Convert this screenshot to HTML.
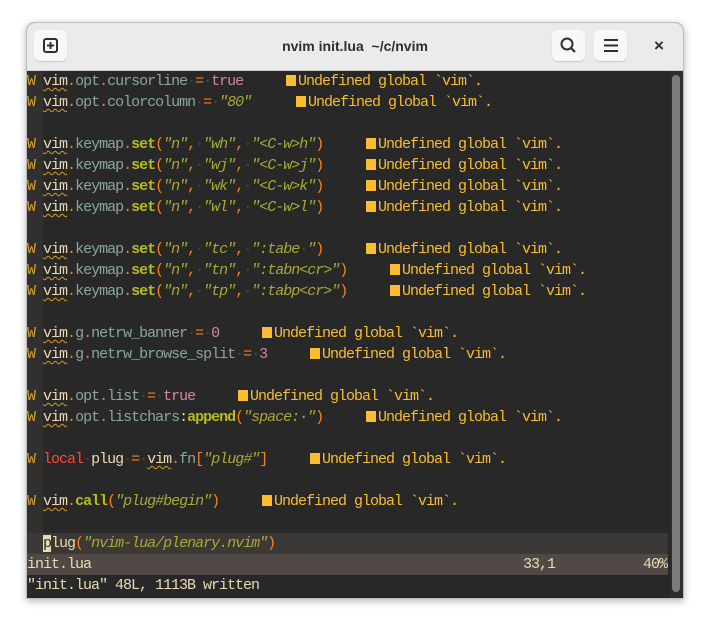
<!DOCTYPE html>
<html><head><meta charset="utf-8"><style>
body{margin:0;width:708px;height:626px;background:#fff;position:relative;overflow:hidden;font-family:"Liberation Sans",sans-serif}
.win{position:absolute;left:26px;top:22px;width:656px;height:575px;border-radius:9px 9px 0 0;background:#282828;box-shadow:0 2px 8px rgba(0,0,0,.3);border:1px solid #bdbdbd;overflow:hidden}
.tb{position:absolute;left:0;top:0;width:656px;height:47px;background:#ebebeb;border-bottom:1px solid #cfcfcf}
.btn{position:absolute;top:7px;width:33px;height:31px;background:#f8f8f8;border-radius:6px;box-shadow:0 1px 1px rgba(0,0,0,.15)}
.title{position:absolute;left:0;right:0;top:15px;text-align:center;font-weight:bold;font-size:14px;color:#2e2e2e}
.term{position:absolute;left:0;top:48px;width:656px;height:527px;background:#282828;font-family:"Liberation Mono",monospace;font-size:15px;letter-spacing:-1px;color:#ebdbb2}
.sc{position:absolute;left:0;top:0;width:16px;height:462px;background:#32302f}
.r{position:absolute;left:0;height:21px;line-height:21px;white-space:pre;width:641px}
.W{color:#d7a32f}
.v{text-decoration:underline wavy #d79921;text-underline-offset:2px;text-decoration-thickness:1px}
.o{color:#fe8019}.f{color:#8aa89a}.k{color:#b8bb26;font-weight:bold}.s{color:#a9a938;font-style:italic}.d{color:#4e4843}.p{color:#d3869b}.red{color:#fb4934}
.dg{position:absolute;color:#fabd2f;white-space:pre}
.dg:before{content:"";display:inline-block;width:10px;height:11px;background:#fabd2f;margin-right:2px;vertical-align:-1px}
.sb{position:absolute;left:643px;top:0;width:13px;height:527px;background:#2d2d2d}
.th{position:absolute;left:645px;top:4px;width:8px;height:517px;background:#7b7b7b;border-radius:4px}
</style></head><body>
<div class="win">
<div class="tb">
<div class="btn" style="left:7px"><svg width="33" height="31"><rect x="10" y="9" width="13" height="13" rx="2" fill="none" stroke="#2e2e2e" stroke-width="2"/><path d="M16.5 12v7M13 15.5h7" stroke="#2e2e2e" stroke-width="2"/></svg></div>
<div class="title">nvim init.lua&nbsp; ~/c/nvim</div>
<div class="btn" style="left:525px"><svg width="33" height="31"><circle cx="15" cy="14" r="5.5" fill="none" stroke="#2e2e2e" stroke-width="2"/><path d="M19 18l4 4" stroke="#2e2e2e" stroke-width="2.2"/></svg></div>
<div class="btn" style="left:567px"><svg width="33" height="31"><path d="M10 10h14M10 15.5h14M10 21h14" stroke="#2e2e2e" stroke-width="2"/></svg></div>
<div style="position:absolute;left:627px;top:13px;font-size:17px;color:#2e2e2e;font-weight:bold">×</div>
</div>
<div class="term">
<div class="sc"></div>
<div class="r" style="top:0"><span class="W">W</span> <span class="v">vim</span><span class="o">.</span><span class="f">opt</span><span class="o">.</span><span class="f">cursorline</span><span class="d">·</span><span class="o">=</span><span class="d">·</span><span class="p">true</span></div>
<div class="dg" style="left:259px;top:0;line-height:21px">Undefined global `vim`.</div>
<div class="r" style="top:21px"><span class="W">W</span> <span class="v">vim</span><span class="o">.</span><span class="f">opt</span><span class="o">.</span><span class="f">colorcolumn</span><span class="d">·</span><span class="o">=</span><span class="d">·</span><span class="s">"80"</span></div>
<div class="dg" style="left:269px;top:21px;line-height:21px">Undefined global `vim`.</div>

<div class="r" style="top:63px"><span class="W">W</span> <span class="v">vim</span><span class="o">.</span><span class="f">keymap</span><span class="o">.</span><span class="k">set</span><span class="o">(</span><span class="s">"n"</span><span class="o">,</span><span class="d">·</span><span class="s">"wh"</span><span class="o">,</span><span class="d">·</span><span class="s">"&lt;C-w&gt;h"</span><span class="o">)</span></div>
<div class="dg" style="left:339px;top:63px;line-height:21px">Undefined global `vim`.</div>
<div class="r" style="top:84px"><span class="W">W</span> <span class="v">vim</span><span class="o">.</span><span class="f">keymap</span><span class="o">.</span><span class="k">set</span><span class="o">(</span><span class="s">"n"</span><span class="o">,</span><span class="d">·</span><span class="s">"wj"</span><span class="o">,</span><span class="d">·</span><span class="s">"&lt;C-w&gt;j"</span><span class="o">)</span></div>
<div class="dg" style="left:339px;top:84px;line-height:21px">Undefined global `vim`.</div>
<div class="r" style="top:105px"><span class="W">W</span> <span class="v">vim</span><span class="o">.</span><span class="f">keymap</span><span class="o">.</span><span class="k">set</span><span class="o">(</span><span class="s">"n"</span><span class="o">,</span><span class="d">·</span><span class="s">"wk"</span><span class="o">,</span><span class="d">·</span><span class="s">"&lt;C-w&gt;k"</span><span class="o">)</span></div>
<div class="dg" style="left:339px;top:105px;line-height:21px">Undefined global `vim`.</div>
<div class="r" style="top:126px"><span class="W">W</span> <span class="v">vim</span><span class="o">.</span><span class="f">keymap</span><span class="o">.</span><span class="k">set</span><span class="o">(</span><span class="s">"n"</span><span class="o">,</span><span class="d">·</span><span class="s">"wl"</span><span class="o">,</span><span class="d">·</span><span class="s">"&lt;C-w&gt;l"</span><span class="o">)</span></div>
<div class="dg" style="left:339px;top:126px;line-height:21px">Undefined global `vim`.</div>

<div class="r" style="top:168px"><span class="W">W</span> <span class="v">vim</span><span class="o">.</span><span class="f">keymap</span><span class="o">.</span><span class="k">set</span><span class="o">(</span><span class="s">"n"</span><span class="o">,</span><span class="d">·</span><span class="s">"tc"</span><span class="o">,</span><span class="d">·</span><span class="s">":tabe<span class="d">·</span>"</span><span class="o">)</span></div>
<div class="dg" style="left:339px;top:168px;line-height:21px">Undefined global `vim`.</div>
<div class="r" style="top:189px"><span class="W">W</span> <span class="v">vim</span><span class="o">.</span><span class="f">keymap</span><span class="o">.</span><span class="k">set</span><span class="o">(</span><span class="s">"n"</span><span class="o">,</span><span class="d">·</span><span class="s">"tn"</span><span class="o">,</span><span class="d">·</span><span class="s">":tabn&lt;cr&gt;"</span><span class="o">)</span></div>
<div class="dg" style="left:363px;top:189px;line-height:21px">Undefined global `vim`.</div>
<div class="r" style="top:210px"><span class="W">W</span> <span class="v">vim</span><span class="o">.</span><span class="f">keymap</span><span class="o">.</span><span class="k">set</span><span class="o">(</span><span class="s">"n"</span><span class="o">,</span><span class="d">·</span><span class="s">"tp"</span><span class="o">,</span><span class="d">·</span><span class="s">":tabp&lt;cr&gt;"</span><span class="o">)</span></div>
<div class="dg" style="left:363px;top:210px;line-height:21px">Undefined global `vim`.</div>

<div class="r" style="top:252px"><span class="W">W</span> <span class="v">vim</span><span class="o">.</span><span class="f">g</span><span class="o">.</span><span class="f">netrw_banner</span><span class="d">·</span><span class="o">=</span><span class="d">·</span><span class="p">0</span></div>
<div class="dg" style="left:235px;top:252px;line-height:21px">Undefined global `vim`.</div>
<div class="r" style="top:273px"><span class="W">W</span> <span class="v">vim</span><span class="o">.</span><span class="f">g</span><span class="o">.</span><span class="f">netrw_browse_split</span><span class="d">·</span><span class="o">=</span><span class="d">·</span><span class="p">3</span></div>
<div class="dg" style="left:283px;top:273px;line-height:21px">Undefined global `vim`.</div>

<div class="r" style="top:315px"><span class="W">W</span> <span class="v">vim</span><span class="o">.</span><span class="f">opt</span><span class="o">.</span><span class="f">list</span><span class="d">·</span><span class="o">=</span><span class="d">·</span><span class="p">true</span></div>
<div class="dg" style="left:211px;top:315px;line-height:21px">Undefined global `vim`.</div>
<div class="r" style="top:336px"><span class="W">W</span> <span class="v">vim</span><span class="o">.</span><span class="f">opt</span><span class="o">.</span><span class="f">listchars</span>:<span class="k">append</span><span class="o">(</span><span class="s">"space:·"</span><span class="o">)</span></div>
<div class="dg" style="left:339px;top:336px;line-height:21px">Undefined global `vim`.</div>

<div class="r" style="top:378px"><span class="W">W</span> <span class="red">local</span><span class="d">·</span>plug<span class="d">·</span><span class="o">=</span><span class="d">·</span><span class="v">vim</span><span class="o">.</span><span class="f">fn</span><span class="o">[</span><span class="s">"plug#"</span><span class="o">]</span></div>
<div class="dg" style="left:283px;top:378px;line-height:21px">Undefined global `vim`.</div>

<div class="r" style="top:420px"><span class="W">W</span> <span class="v">vim</span><span class="o">.</span><span class="k">call</span><span class="o">(</span><span class="s">"plug#begin"</span><span class="o">)</span></div>
<div class="dg" style="left:235px;top:420px;line-height:21px">Undefined global `vim`.</div>

<div class="r" style="top:462px;background:#3c3836">  <span style="background:#ebdbb2;color:#282828">p</span>lug<span class="o">(</span><span class="s">"nvim-lua/plenary.nvim"</span><span class="o">)</span></div>
<div class="r" style="top:483px;background:#504945;color:#ebdbb2">init.lua</div>
<div class="r" style="top:483px;left:496px;width:60px;color:#ebdbb2">33,1</div>
<div class="r" style="top:483px;left:616px;width:26px;color:#ebdbb2">40%</div>
<div class="r" style="top:504px">"init.lua" 48L, 1113B written</div>
<div class="sb"></div><div class="th"></div>
</div>
</div>
</body></html>
